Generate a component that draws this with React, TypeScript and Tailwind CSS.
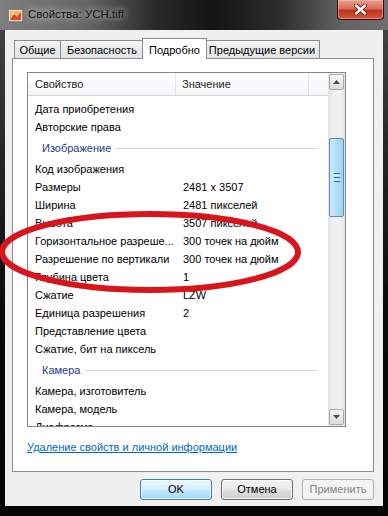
import React from 'react';

type Row = { name: string; value?: string } | { group: string };

const rows: Row[] = [
  { name: 'Дата приобретения' },
  { name: 'Авторские права' },
  { group: 'Изображение' },
  { name: 'Код изображения' },
  { name: 'Размеры', value: '2481 x 3507' },
  { name: 'Ширина', value: '2481 пикселей' },
  { name: 'Высота', value: '3507 пикселей' },
  { name: 'Горизонтальное разреше...', value: '300 точек на дюйм' },
  { name: 'Разрешение по вертикали', value: '300 точек на дюйм' },
  { name: 'Глубина цвета', value: '1' },
  { name: 'Сжатие', value: 'LZW' },
  { name: 'Единица разрешения', value: '2' },
  { name: 'Представление цвета' },
  { name: 'Сжатие, бит на пиксель' },
  { group: 'Камера' },
  { name: 'Камера, изготовитель' },
  { name: 'Камера, модель' },
  { name: 'Диафрагма' },
];

const tabs = [
  { label: 'Общие', w: 'w-[47px]' },
  { label: 'Безопасность', w: 'w-[84px]' },
  { label: 'Подробно', w: 'w-[65px]', active: true },
  { label: 'Предыдущие версии', w: 'w-[116px]' },
];

function FileIcon() {
  return (
    <svg width="15" height="15" viewBox="0 0 15 15">
      <rect x="0.5" y="1.5" width="14" height="12" fill="#e8e2d6" stroke="#8a8170" />
      <rect x="2" y="3" width="11" height="9" fill="#f3b45a" />
      <path d="M2 12 L6 6 L9 9 L13 4 L13 12 Z" fill="#d8452a" />
      <circle cx="5" cy="5.5" r="1.3" fill="#fff3c2" />
    </svg>
  );
}

function CloseButton() {
  return (
    <div className="mr-[4px] flex h-[20px] w-[47px] items-center justify-center rounded-b-[4px] border border-t-0 border-[#3b0d06] bg-[linear-gradient(180deg,#e9a393_0%,#d66b55_45%,#c0321a_55%,#d5583c_100%)] shadow-[inset_0_0_0_1px_rgba(255,200,190,0.45)]">
      <svg width="13" height="11" viewBox="0 0 13 11">
        <path d="M2 1.5 L11 9.5 M11 1.5 L2 9.5" stroke="#5a1508" strokeWidth="4" strokeLinecap="round" />
        <path d="M2 1.5 L11 9.5 M11 1.5 L2 9.5" stroke="#ffffff" strokeWidth="2.4" strokeLinecap="round" />
      </svg>
    </div>
  );
}

function Arrow({ up }: { up?: boolean }) {
  return (
    <svg width="7" height="4" viewBox="0 0 7 4">
      <path d={up ? 'M0 4 L3.5 0 L7 4 Z' : 'M0 0 L3.5 4 L7 0 Z'} fill="#4d4d4d" />
    </svg>
  );
}

function Scrollbar() {
  return (
    <div className="flex w-[17px] flex-col bg-[linear-gradient(90deg,#e2e2e2_0%,#efefef_30%,#f1f1f1_70%,#e6e6e6_100%)] px-[1px] py-[1px]">
      <div className="flex h-[16px] items-center justify-center rounded-[2px] border border-[#a9a9a9] bg-[linear-gradient(180deg,#f7f7f7,#dcdcdc)]">
        <Arrow up />
      </div>
      <div className="h-[48px]" />
      <div className="flex h-[79px] flex-col items-center justify-center gap-[1px] rounded-[2px] border border-[#5c8db4] bg-[linear-gradient(90deg,#cbe8f9_0%,#b3ddf7_50%,#9fd2f3_100%)]">
        <div className="h-px w-[6px] bg-[#3e6d92]" />
        <div className="h-px w-[6px] bg-[#e6f4fd]" />
        <div className="h-px w-[6px] bg-[#3e6d92]" />
        <div className="h-px w-[6px] bg-[#e6f4fd]" />
        <div className="h-px w-[6px] bg-[#3e6d92]" />
      </div>
      <div className="flex-1" />
      <div className="flex h-[16px] items-center justify-center rounded-[2px] border border-[#a9a9a9] bg-[linear-gradient(180deg,#f7f7f7,#dcdcdc)]">
        <Arrow />
      </div>
    </div>
  );
}

function ListView() {
  return (
    <div className="flex h-[355px] w-[319px] border border-[#828790] bg-white">
      <div className="flex min-w-0 flex-1 flex-col overflow-hidden">
        <div className="flex h-[23px] shrink-0 items-center border-b border-[#d5d5d5] bg-[linear-gradient(180deg,#ffffff,#f3f4f6)] text-[#1e1e1e]">
          <div className="w-[148px] border-r border-[#e3e5e8] pl-[7px] leading-[22px]">Свойство</div>
          <div className="w-[133px] border-r border-[#e3e5e8] pl-[6px] leading-[22px]">Значение</div>
        </div>
        <div className="flex flex-col pt-[4px]">
          {rows.map((r, i) =>
            'group' in r ? (
              <div key={i} className="flex h-[24px] items-center pl-[14px] pr-[11px]">
                <span className="text-[#1e3a8c]">{r.group}</span>
                <div className="ml-[5px] h-px flex-1 bg-[#cdd3dc]" />
              </div>
            ) : (
              <div key={i} className="flex h-[18px] items-center whitespace-nowrap text-black">
                <div className="w-[148px] overflow-hidden pl-[7px]">{r.name}</div>
                <div className="pl-[7px]">{r.value ?? ''}</div>
              </div>
            )
          )}
        </div>
      </div>
      <Scrollbar />
    </div>
  );
}

export default function App() {
  return (
    <div className="relative h-[516px] w-[388px] overflow-hidden bg-[linear-gradient(180deg,#4a4a4a_0%,#262626_30%,#0a0a0a_60%,#050505_100%)] font-['Liberation_Sans',Arial,sans-serif] text-[11px]">
      <div className="flex h-[30px] items-center bg-[linear-gradient(90deg,#7f7f7f_0%,#666_22%,#2a2a2a_40%,#141414_55%,#2c2c2c_72%,#626262_88%,#6e6e6e_100%)] pl-[8px]">
        <FileIcon />
        <span className="ml-[5px] text-[11.5px] text-[#101010] [text-shadow:0_0_6px_rgba(255,255,255,0.75),0_0_12px_rgba(255,255,255,0.45)]">
          Свойства: УСН.tiff
        </span>
        <div className="ml-auto self-start">
          <CloseButton />
        </div>
      </div>

      <div className="mx-[5px] flex h-[476px] flex-col bg-[#f0f0f0] pl-[7px] pr-[9px] pt-[8px]">
        <div className="relative z-10 flex h-[20px] items-end whitespace-nowrap pl-[2px]">
          {tabs.map((t) =>
            t.active ? (
              <div
                key={t.label}
                className={`${t.w} relative z-10 -mx-[2px] -mb-px flex h-[21px] justify-center border border-b-0 border-[#898c95] bg-white pt-[3px] text-black`}
              >
                {t.label}
              </div>
            ) : (
              <div
                key={t.label}
                className={`${t.w} -ml-px flex h-[18px] items-center justify-center border border-b-0 border-[#898c95] bg-[linear-gradient(180deg,#f3f3f3,#e3e3e3)] pt-[1px] text-black first:ml-0`}
              >
                {t.label}
              </div>
            )
          )}
        </div>

        <div className="flex h-[414px] w-[362px] flex-col border border-[#898c95] bg-white pl-[14px] pt-[13px]">
          <ListView />
          <div className="mt-[12px] leading-[16px]">
            <span className="text-[#0066cc] underline">Удаление свойств и личной информации</span>
          </div>
        </div>

        <div className="mt-[7px] flex justify-end gap-[9px]">
          <div className="flex h-[21px] w-[72px] items-center justify-center rounded-[3px] border border-[#3c7fb1] bg-[linear-gradient(180deg,#eaf6fd_0%,#d9f0fc_45%,#bee6fd_55%,#a7d9f5_100%)] text-black shadow-[inset_0_0_0_1px_rgba(255,255,255,0.7)]">
            OK
          </div>
          <div className="flex h-[21px] w-[72px] items-center justify-center rounded-[3px] border border-[#707070] bg-[linear-gradient(180deg,#f2f2f2_0%,#ebebeb_45%,#dddddd_55%,#cfcfcf_100%)] text-black shadow-[inset_0_0_0_1px_rgba(255,255,255,0.7)]">
            Отмена
          </div>
          <div className="flex h-[21px] w-[72px] items-center justify-center rounded-[3px] border border-[#adb2b5] bg-[#f4f4f4] text-[#838383]">
            Применить
          </div>
        </div>
      </div>

      <svg className="pointer-events-none absolute inset-0" width="388" height="516" viewBox="0 0 388 516">
        <ellipse cx="150" cy="252" rx="148" ry="38" fill="none" stroke="#d8151d" strokeWidth="6" />
      </svg>
    </div>
  );
}
